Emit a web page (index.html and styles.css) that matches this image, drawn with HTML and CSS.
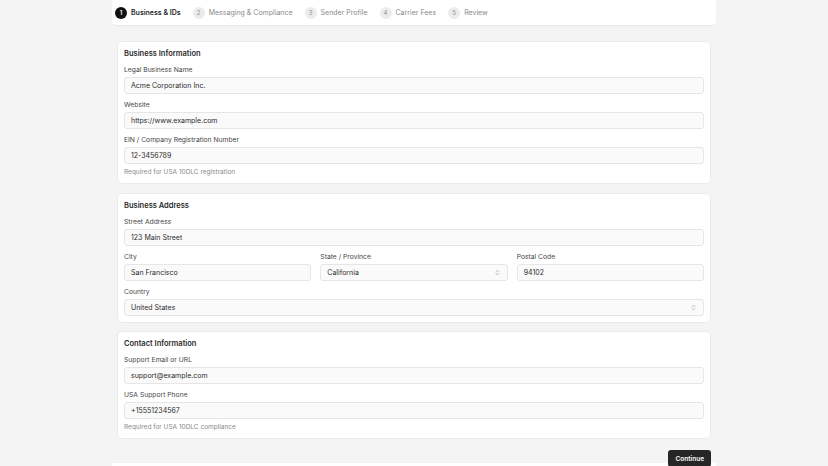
FILE: index.html
```html
<!DOCTYPE html>
<html lang="en">
<head>
<meta charset="utf-8">
<title>Registration</title>
<link rel="stylesheet" href="styles.css">
</head>
<body>
<div class="page">
  <header class="stepper">
    <div class="step active"><span class="num">1</span><span class="step-label">Business &amp; IDs</span></div>
    <div class="step"><span class="num">2</span><span class="step-label">Messaging &amp; Compliance</span></div>
    <div class="step"><span class="num">3</span><span class="step-label">Sender Profile</span></div>
    <div class="step"><span class="num">4</span><span class="step-label">Carrier Fees</span></div>
    <div class="step"><span class="num">5</span><span class="step-label">Review</span></div>
  </header>

  <main class="content">
    <section class="card">
      <h2 class="card-title">Business Information</h2>
      <div class="fields">
        <div class="field">
          <label class="label">Legal Business Name</label>
          <div class="input">Acme Corporation Inc.</div>
        </div>
        <div class="field">
          <label class="label">Website</label>
          <div class="input">https://www.example.com</div>
        </div>
        <div class="field">
          <label class="label">EIN / Company Registration Number</label>
          <div class="input">12-3456789</div>
          <p class="help">Required for USA 10DLC registration</p>
        </div>
      </div>
    </section>

    <section class="card">
      <h2 class="card-title">Business Address</h2>
      <div class="fields">
        <div class="field">
          <label class="label">Street Address</label>
          <div class="input">123 Main Street</div>
        </div>
        <div class="row3">
          <div class="field">
            <label class="label">City</label>
            <div class="input">San Francisco</div>
          </div>
          <div class="field">
            <label class="label">State / Province</label>
            <div class="input select"><span>California</span>
              <svg class="chev" viewBox="0 0 24 24" fill="none" stroke="currentColor" stroke-width="2" stroke-linecap="round" stroke-linejoin="round"><path d="m7 15 5 5 5-5"/><path d="m7 9 5-5 5 5"/></svg>
            </div>
          </div>
          <div class="field">
            <label class="label">Postal Code</label>
            <div class="input">94102</div>
          </div>
        </div>
        <div class="field">
          <label class="label">Country</label>
          <div class="input select"><span>United States</span>
            <svg class="chev" viewBox="0 0 24 24" fill="none" stroke="currentColor" stroke-width="2" stroke-linecap="round" stroke-linejoin="round"><path d="m7 15 5 5 5-5"/><path d="m7 9 5-5 5 5"/></svg>
          </div>
        </div>
      </div>
    </section>

    <section class="card">
      <h2 class="card-title">Contact Information</h2>
      <div class="fields">
        <div class="field">
          <label class="label">Support Email or URL</label>
          <div class="input">support@example.com</div>
        </div>
        <div class="field">
          <label class="label">USA Support Phone</label>
          <div class="input">+15551234567</div>
          <p class="help">Required for USA 10DLC compliance</p>
        </div>
      </div>
    </section>

    <div class="actions">
      <button class="btn-primary">Continue</button>
    </div>
  </main>
  <div class="footer-bar"></div>
</div>
</body>
</html>
```

FILE: styles.css
```css
html {
  scrollbar-width: none;
}
html::-webkit-scrollbar { display: none; }

body {
  margin: 0;
  background: #f4f4f4;
  font-family: Inter, "Noto Sans", sans-serif;
  color: #262626;
}

.page {
  zoom: 0.5;
}

.stepper {
  width: 1208px;
  height: 50px;
  margin: 0 auto;
  box-sizing: border-box;
  padding: 0 6px;
  background: #fff;
  border-radius: 0 0 8px 8px;
  box-shadow: 0 1px 2px rgba(0, 0, 0, 0.05);
  display: flex;
  align-items: center;
  gap: 24px;
}

.step {
  display: flex;
  align-items: center;
  gap: 8px;
}

.num {
  width: 24px;
  height: 24px;
  border-radius: 50%;
  background: #ececec;
  color: #9a9a9a;
  font-size: 12px;
  font-weight: 500;
  display: flex;
  align-items: center;
  justify-content: center;
}

.step-label {
  font-size: 14px;
  color: #8a8a8a;
}

.step.active .num {
  background: #111;
  color: #fff;
  font-weight: 600;
}

.step.active .step-label {
  color: #1f1f1f;
  font-weight: 600;
}

.content {
  width: 1188px;
  margin: 32px auto 0;
  display: flex;
  flex-direction: column;
  gap: 17px;
}

.card {
  background: #fff;
  border: 2px solid #ebebeb;
  border-radius: 10px;
  padding: 14px 12px 12px;
}

.card-title {
  margin: 0 0 14px;
  font-size: 15px;
  line-height: 20px;
  font-weight: 600;
  color: #2a2a2a;
}

.fields {
  display: flex;
  flex-direction: column;
  gap: 14px;
}

.field {
  display: flex;
  flex-direction: column;
  gap: 6px;
  min-width: 0;
}

.label {
  font-size: 13.5px;
  line-height: 16px;
  font-weight: 400;
  color: #474747;
}

.input {
  height: 34px;
  box-sizing: border-box;
  border: 2px solid #e6e6e6;
  border-radius: 6px;
  background: #fafafa;
  padding: 0 12px;
  display: flex;
  align-items: center;
  justify-content: space-between;
  font-size: 14px;
  color: #2b2b2b;
}

.chev {
  width: 14px;
  height: 14px;
  color: #8c8c8c;
}

.row3 {
  display: grid;
  grid-template-columns: 1fr 1fr 1fr;
  gap: 18px;
}

.help {
  margin: 0;
  font-size: 13px;
  line-height: 20px;
  color: #8a8a8a;
}

.actions {
  margin-top: 5px;
  display: flex;
  justify-content: flex-end;
  height: 26px;
}

.btn-primary {
  position: relative;
  z-index: 1;
  height: 34px;
  padding: 0 14px;
  border: none;
  border-radius: 6px;
  background: #262626;
  color: #fff;
  font-family: inherit;
  font-size: 13px;
  font-weight: 600;
}

.footer-bar {
  width: 1208px;
  height: 40px;
  margin: 0 auto;
  background: #fff;
}
```
